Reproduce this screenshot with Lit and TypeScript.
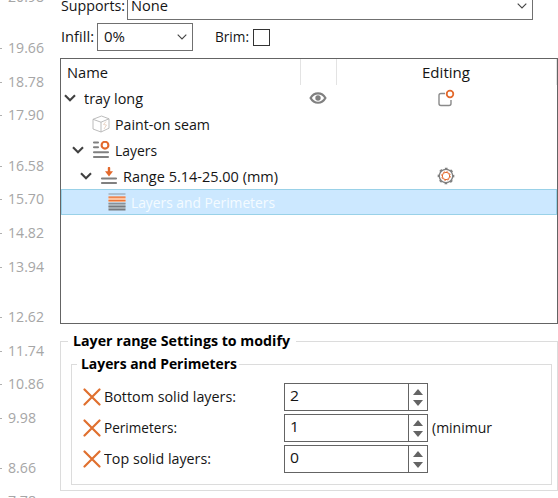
import { LitElement, html, css, svg, nothing } from "lit";
import { customElement, property } from "lit/decorators.js";
import { styleMap } from "lit/directives/style-map.js";

/** A single line of text condensed or widened to a given advance width. */
@customElement("fit-text")
class FitText extends LitElement {
  @property({ type: Number }) w = 0;
  @property() text = "";
  static styles = css`
    :host { display: block; flex: none; height: 20px; line-height: 20px; white-space: pre; }
    span { display: inline-block; transform-origin: 0 50%; }
  `;
  updated() {
    const s = this.renderRoot.querySelector("span")!;
    s.style.transform = "none";
    const natural = s.getBoundingClientRect().width;
    this.style.width = this.w + "px";
    s.style.transform = `scaleX(${this.w / natural})`;
  }
  render() {
    return html`<span>${this.text}</span>`;
  }
}

const t = (text: string, w: number) => html`<fit-text .text=${text} .w=${w}></fit-text>`;

const arrow = html`<svg class="arrow" width="10" height="6" viewBox="0 0 10 6">
  <path d="M.7 .7 5 5 9.3 .7" fill="none" stroke="#444" stroke-width="1.1" /></svg>`;

const chevron = html`<svg class="chevron" width="12" height="8" viewBox="0 0 12 8">
  <path d="M1 1.3 6 6.2 11 1.3" fill="none" stroke="#404040" stroke-width="2.1" /></svg>`;

const icon = (body: unknown) => html`<svg class="icon" width="18" height="18" viewBox="0 0 18 18" fill="none">${body}</svg>`;

const cube = icon(svg`<g stroke="#b4b4b4" stroke-width=".9" stroke-linejoin="round">
  <path d="M1 4.3 9.5 1 17 3.8V13.2L9 17 1 14Z" /><path d="M1 4.3 9 7.2 17 3.8M9 7.2V17" /></g>
  <path d="M14 6.5 11.5 9.5 14.5 10 12 14" stroke="#e3c9b8" stroke-width=".8" />`);

const layers = icon(svg`<g stroke="#808080" stroke-width="2.1" stroke-linecap="round">
  <path d="M2 1.5H6M2 6.2H6M2 11.2H16M2 16H16" /></g>
  <circle cx="13" cy="4.2" r="3.4" stroke="#e3692c" stroke-width="2.1" />`);

const range = icon(svg`<g stroke="#808080" stroke-width="2.2" stroke-linecap="round">
  <path d="M2 11.5H16M2 16H16" /></g>
  <path d="M9 1V5" stroke="#e3692c" stroke-width="2.4" stroke-linecap="round" />
  <path d="M5 4.2H13L9 9.6Z" fill="#e3692c" />`);

const perimeters = icon(svg`
  <path d="M.5 1H17.5" stroke="#8b98a3" stroke-width="1" />
  <path d="M.5 3.5H17.5V9H.5Z" fill="#ffc29d" /><path d="M.5 9.5H17.5V16H.5Z" fill="#b3bcc2" />
  <path d="M.5 4.2H17.5M.5 7.7H17.5" stroke="#e97438" stroke-width="1.3" />
  <path d="M.5 10.5H17.5" stroke="#87919a" stroke-width="1.2" />
  <path d="M.5 13.5H17.5M.5 16.6H17.5" stroke="#777b80" stroke-width="1.7" />`);

const eye = icon(svg`
  <path d="M1.6 9C5 2.7 13 2.7 16.4 9 13 15.3 5 15.3 1.6 9Z" stroke="#808080" stroke-width="2.2" />
  <circle cx="9" cy="9" r="2.7" fill="#808080" />`);

const edit = icon(svg`
  <path d="M8 4.5H4Q2 4.5 2 6.5V14.5Q2 16.5 4 16.5H12Q14 16.5 14 14.5V11" stroke="#8a8a8a" stroke-width="1.4" />
  <circle cx="13" cy="5" r="3.3" stroke="#e3692c" stroke-width="1.8" />`);

const gear = icon(svg`
  <circle cx="9" cy="9" r="6.7" stroke="#808080" stroke-width="1.3" />
  <circle cx="9" cy="9" r="7.5" stroke="#808080" stroke-width="1.7" stroke-dasharray="2.7 3.19" stroke-dashoffset="1.35" />
  <circle cx="9" cy="9" r="3.7" stroke="#e3692c" stroke-width="1" />
  <circle cx="9" cy="9" r="4.4" stroke="#e3692c" stroke-width=".8" stroke-dasharray="1.8 1.65" />`);

const cross = icon(svg`<path d="M1.5 1.5 16.5 16.5M16.5 1.5 1.5 16.5" stroke="#e0702f" stroke-width="2.2" stroke-linecap="round" />`);

const marks: [string, number][] = [
  ["20.98", -3], ["19.66", 48], ["18.78", 82], ["17.90", 115], ["16.58", 166], ["15.70", 199],
  ["14.82", 233], ["13.94", 267], ["12.62", 317], ["11.74", 351], ["10.86", 384], ["9.98", 418],
  ["8.66", 468], ["7.78", 501],
];

interface Node {
  label: string; w: number; indent: number; open?: boolean; icon?: unknown;
  visible?: boolean; action?: unknown; selected?: boolean;
}
const nodes: Node[] = [
  { label: "tray long", w: 59, indent: 3, open: true, visible: true, action: edit },
  { label: "Paint-on seam", w: 95, indent: 31, icon: cube },
  { label: "Layers", w: 42, indent: 11, open: true, icon: layers },
  { label: "Range 5.14-25.00 (mm)", w: 155, indent: 19, open: true, icon: range, action: gear },
  { label: "Layers and Perimeters", w: 144, indent: 47, icon: perimeters, selected: true },
];

const options = [
  { label: "Bottom solid layers:", w: 132, value: "2", note: "" },
  { label: "Perimeters:", w: 73, value: "1", note: "(minimur" },
  { label: "Top solid layers:", w: 107, value: "0", note: "" },
];

@customElement("app-root")
class AppRoot extends LitElement {
  static styles = css`
    * { box-sizing: border-box; }
    :host {
      display: grid; grid-template-columns: 60px 498px; width: 558px; height: 498px;
      overflow: hidden; background: #fff; color: #151515;
      font-family: "Open Sans", "Noto Sans", sans-serif; font-size: 14.6px;
    }
    svg { display: block; flex: none; }
    .ruler { height: 498px; overflow: hidden; color: #a6a6a6; }
    .mark { display: flex; align-items: center; height: 20px; gap: 6px; }
    .mark::before { content: ""; width: 2px; height: 1px; background: #b0b0b0; }
    .mark fit-text { line-height: 18px; }
    .panel { height: 498px; overflow: hidden; }
    .field { display: flex; align-items: center; }
    .field > fit-text { line-height: 18px; }
    .supports { height: 28px; margin-top: -8px; padding-left: 1px; }
    .infill { height: 28px; margin-top: 3px; padding-left: 1px; }
    .combo { height: 28px; border: 1px solid #707070; display: flex; align-items: center;
      justify-content: space-between; }
    .supports .combo { width: 406px; margin-left: 2px; padding: 0 5px 0 3px; }
    .infill .combo { width: 96px; margin: 0 22px 0 3px; padding: 0 5px 0 6px; }
    .combo fit-text { line-height: 19px; }
    .box { width: 17px; height: 17px; border: 1px solid #333; margin-left: 4px; }
    .tree { margin-top: 7px; height: 266px; border: 1px solid #646464; }
    .row { display: grid; grid-template-columns: 240px 36px 220px; height: 26px; }
    .cell { display: flex; align-items: center; }
    .middle { justify-content: center; padding-right: 2px; }
    .head .middle { padding-right: 1px; }
    .head .cell { border-right: 1px solid #e3e3e3; }
    .head .cell:first-child { padding-left: 6px; }
    .selected { background: #cce8ff; outline: 1px solid #99d1e8; outline-offset: -1px; color: #f4fbff; }
    .chevron { margin-right: 8px; }
    .icon + fit-text { margin-left: 5px; }
    fieldset { margin: 0; border: 1px solid #dcdcdc; min-width: 0; }
    legend { display: block; font-weight: 700; color: #000; height: 20px; }
    legend fit-text { line-height: 18px; }
    .outer { margin: 7px 0 0; width: 498px; height: 160px; padding: 3px 5px 0 10px; }
    .outer > legend { margin-left: -3px; padding: 0 6px 0 5px; }
    .inner { width: 481px; height: 131px; padding: 9px 0 0 11px; }
    .inner > legend { margin-left: -6px; padding: 0 2px 0 4px; }
    .option { display: grid; grid-template-columns: 201px 144px auto; height: 28px; margin-bottom: 3px; }
    .option .cell { height: 27px; }
    .option .icon { margin-left: -.5px; }
    .option .icon + fit-text { margin-left: 3.5px; }
    .option fit-text { line-height: 19px; }
    .spin { display: grid; grid-template-columns: 123px 19px; border: 1px solid #646464; height: 28px; }
    .value { padding: 2px 0 0 5px; }
    .value fit-text { line-height: 18px; }
    .buttons { border-left: 1px solid #646464; display: flex; flex-direction: column;
      align-items: center; justify-content: center; gap: 5px; }
    .up, .down { border: 5.5px solid transparent; width: 0; height: 0; }
    .up { border-top: 0; border-bottom: 6px solid #646464; }
    .down { border-bottom: 0; border-top: 6px solid #646464; }
    .note { padding-left: 4px; }
  `;

  private ruler() {
    return marks.map(([label, y], i) => {
      const gap = i ? y - marks[i - 1][1] - 20 : y - 10;
      return html`<div class="mark" style=${styleMap({ marginTop: gap + "px" })}>
        ${t(label, label.length > 4 ? 36 : 28)}</div>`;
    });
  }

  private node(n: Node) {
    return html`<div class="row ${n.selected ? "selected" : ""}">
      <div class="cell" style=${styleMap({ paddingLeft: n.indent + "px" })}>
        ${n.open ? chevron : nothing}${n.icon ?? nothing}${t(n.label, n.w)}
      </div>
      <div class="cell middle">${n.visible ? eye : nothing}</div>
      <div class="cell middle">${n.action ?? nothing}</div>
    </div>`;
  }

  render() {
    return html`
      <div class="ruler">${this.ruler()}</div>
      <div class="panel">
        <div class="field supports">${t("Supports:", 64)}<div class="combo">${t("None", 37)}${arrow}</div></div>
        <div class="field infill">
          ${t("Infill:", 33)}<div class="combo">${t("0%", 21)}${arrow}</div>
          ${t("Brim:", 34)}<div class="box"></div>
        </div>
        <div class="tree">
          <div class="row head">
            <div class="cell">${t("Name", 41)}</div><div class="cell"></div>
            <div class="cell middle">${t("Editing", 48)}</div>
          </div>
          ${nodes.map((n) => this.node(n))}
        </div>
        <fieldset class="outer">
          <legend>${t("Layer range Settings to modify", 217)}</legend>
          <fieldset class="inner">
            <legend>${t("Layers and Perimeters", 156)}</legend>
            ${options.map((o) => html`<div class="option">
              <div class="cell">${cross}${t(o.label, o.w)}</div>
              <div class="spin"><div class="value">${t(o.value, 9)}</div>
                <div class="buttons"><i class="up"></i><i class="down"></i></div></div>
              <div class="cell note">${o.note ? t(o.note, 60) : nothing}</div>
            </div>`)}
          </fieldset>
        </fieldset>
      </div>`;
  }
}
